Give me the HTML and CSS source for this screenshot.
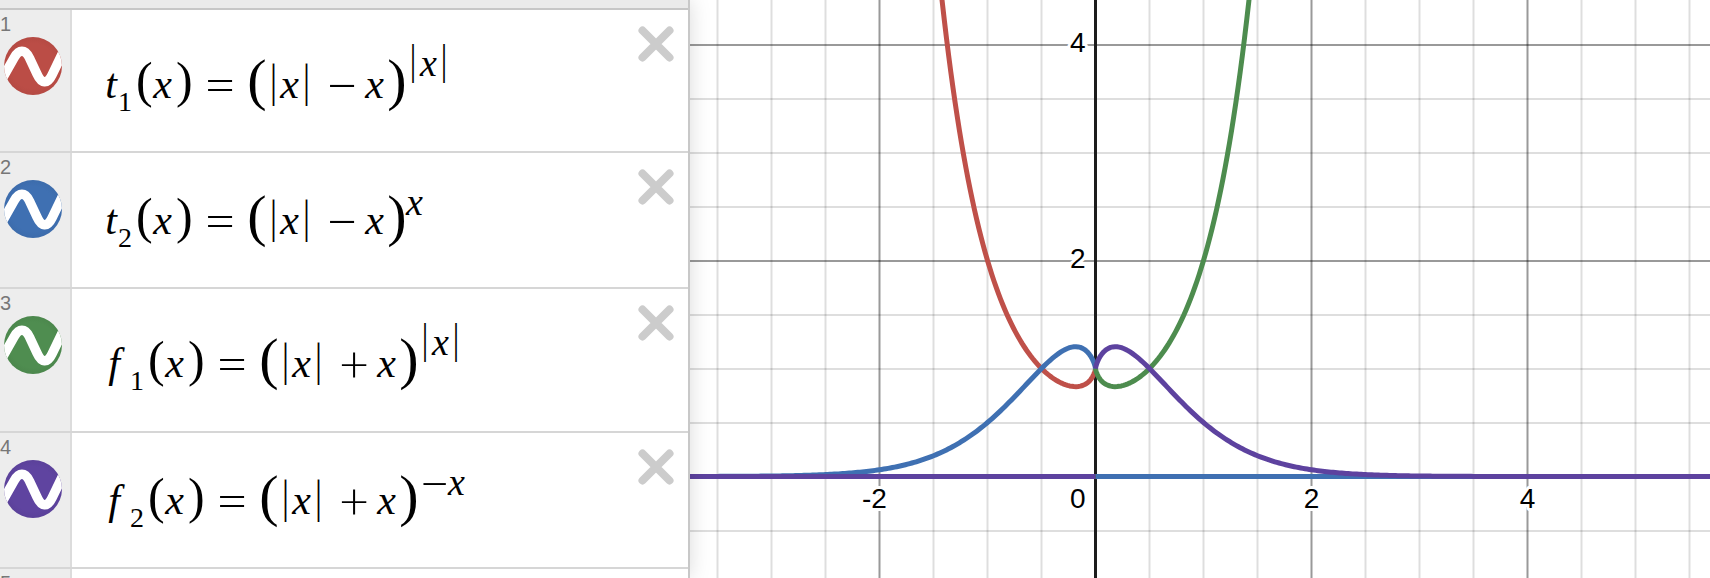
FILE: index.html
```html
<!DOCTYPE html>
<html lang="en">
<head>
<meta charset="utf-8">
<title>Graphing Calculator</title>
<link rel="stylesheet" href="styles.css">
</head>
<body>
<svg class="defs" aria-hidden="true">
  <symbol id="wave" viewBox="0 0 58 58"><path d="M-3 44L10 21C15 12 21 12 25.500 21L33 37C37.500 47 43.500 47.500 48 38L60 13" fill="none" stroke="#fff" stroke-width="9.500"/></symbol>
  <symbol id="cross" viewBox="0 0 36 36"><path d="M4.500 4.500L31.500 31.500M31.500 4.500L4.500 31.500" fill="none" stroke="#ccc" stroke-width="8" stroke-linecap="round"/></symbol>
</svg>
<main class="app">
  <section class="panel" aria-label="Expressions">
    <div class="toolbar"></div>
    <ol class="list">
      <li class="row">
        <div class="tab"><span class="num">1</span><button class="icon red" aria-label="Hide expression 1"><svg><use href="#wave"/></svg></button></div>
        <div class="math tall"><i class="t">t</i><sub>1</sub><span class="lp">(</span><i>x</i><span class="rp">)</span><span class="op eq">=</span><span class="lp big">(</span><span class="bar">|</span><i>x</i><span class="bar">|</span><span class="op bin">−</span><i>x</i><span class="rp big">)</span><sup class="abs"><span class="bar">|</span><i>x</i><span class="bar">|</span></sup></div>
        <button class="close" aria-label="Delete expression 1"><svg><use href="#cross"/></svg></button>
      </li>
      <li class="row">
        <div class="tab"><span class="num">2</span><button class="icon blue" aria-label="Hide expression 2"><svg><use href="#wave"/></svg></button></div>
        <div class="math"><i class="t">t</i><sub>2</sub><span class="lp">(</span><i>x</i><span class="rp">)</span><span class="op eq">=</span><span class="lp big">(</span><span class="bar">|</span><i>x</i><span class="bar">|</span><span class="op bin">−</span><i>x</i><span class="rp big">)</span><sup class="var"><i>x</i></sup></div>
        <button class="close" aria-label="Delete expression 2"><svg><use href="#cross"/></svg></button>
      </li>
      <li class="row">
        <div class="tab"><span class="num">3</span><button class="icon green" aria-label="Hide expression 3"><svg><use href="#wave"/></svg></button></div>
        <div class="math tall deep"><i class="f">f</i><sub>1</sub><span class="lp">(</span><i>x</i><span class="rp">)</span><span class="op eq">=</span><span class="lp big">(</span><span class="bar">|</span><i>x</i><span class="bar">|</span><span class="op bin plus">+</span><i>x</i><span class="rp big">)</span><sup class="abs"><span class="bar">|</span><i>x</i><span class="bar">|</span></sup></div>
        <button class="close" aria-label="Delete expression 3"><svg><use href="#cross"/></svg></button>
      </li>
      <li class="row">
        <div class="tab"><span class="num">4</span><button class="icon purple" aria-label="Hide expression 4"><svg><use href="#wave"/></svg></button></div>
        <div class="math"><i class="f">f</i><sub>2</sub><span class="lp">(</span><i>x</i><span class="rp">)</span><span class="op eq">=</span><span class="lp big">(</span><span class="bar">|</span><i>x</i><span class="bar">|</span><span class="op bin plus">+</span><i>x</i><span class="rp big">)</span><sup><span class="op">−</span><i>x</i></sup></div>
        <button class="close" aria-label="Delete expression 4"><svg><use href="#cross"/></svg></button>
      </li>
      <li class="row">
        <div class="tab"><span class="num">5</span></div>
        <div class="math"></div>
      </li>
    </ol>
  </section>
  <svg class="graph" role="img" aria-label="Graph of four functions"></svg>
</main>
<script src="graph.js"></script>
</body>
</html>
```
FILE: styles.css
```css
* { box-sizing: border-box; }
body {
  margin: 0;
  height: 100vh;
  overflow: hidden;
  background: #fff;
  font-family: "Liberation Sans", Arial, sans-serif;
}
.defs { position: absolute; width: 0; height: 0; }
.app { display: flex; height: 100%; overflow: hidden; }
.panel {
  flex: 0 0 690px;
  z-index: 1;
  background: #fff;
  border-right: 2px solid #c8c8c8;
  box-shadow: 0 0 20px rgba(0, 0, 0, .15);
}
.toolbar { height: 10px; background: #eaeaea; border-bottom: 2px solid #c6c6c6; }
.list { list-style: none; margin: 0; padding: 0; }
.row { display: flex; align-items: stretch; border-bottom: 2px solid #d6d6d6; }
.tab {
  flex: 0 0 72px;
  background: #ededed;
  border-right: 2px solid #dcdcdc;
  display: flex;
  flex-direction: column;
  gap: 2px;
  padding-top: 3px;
}
.num { font-size: 20px; line-height: 22px; color: #777; }
button { border: 0; padding: 0; background: none; cursor: pointer; }
button svg { display: block; width: 100%; height: 100%; }
.icon {
  width: 58px;
  height: 58px;
  margin-left: 4px;
  border-radius: 50%;
  overflow: hidden;
}
.red { background: radial-gradient(circle, #bb4d46 55%, #a9443e); }
.blue { background: radial-gradient(circle, #3f70b2 55%, #38649f); }
.green { background: radial-gradient(circle, #4f8d50 55%, #457c46); }
.purple { background: radial-gradient(circle, #5f44a0 55%, #533b8e); }
.close { flex: none; width: 36px; height: 36px; margin: 16px 14px 0 0; }

.math {
  flex: 1;
  min-height: 134px;
  padding: 42px 0 42px 32px;
  font: 42px/50px "Liberation Serif", "Times New Roman", serif;
  white-space: nowrap;
  color: #000;
}
.math.tall { padding-top: 49px; }
.math.deep { padding-bottom: 43px; }
.math span, .math i, sub, sup { display: inline-block; line-height: 0; text-align: center; }
.math i { width: 21px; }
.math i.t { width: 14px; }
.math i.f { width: 26px; text-align: right; padding-right: 10px; }
sub { width: 14px; margin-right: 4px; font-size: 28px; vertical-align: -13px; }
.math .lp { width: 16px; font-size: 50px; vertical-align: 1px; }
.math .rp { width: 16px; margin-left: 3px; font-size: 50px; vertical-align: 1px; }
.math .op {
  width: 34px;
  font-family: Lato, sans-serif;
  font-weight: 300;
  font-size: 58px;
  vertical-align: -7px;
}
.math .eq { margin: 0 10px 0 11px; }
.math .bin { margin: 0 5px 0 13px; }
.math .op.plus { font-size: 52px; vertical-align: -5px; }
.math .lp.big { width: 20px; font-size: 58px; vertical-align: -1px; }
.math .rp.big { width: 20px; margin-left: 2px; font-size: 58px; vertical-align: -1px; }
.math .bar {
  width: 10px;
  margin: 0 1px;
  font-family: Lato, sans-serif;
  font-weight: 300;
  font-size: 46px;
}
sup { font-size: 38px; vertical-align: 19px; }
sup.abs { vertical-align: 22px; }
sup.var { margin-left: -2px; }
.math sup i { width: 19px; }
.math sup .bar { font-size: 42px; }
.math sup .op { width: 28px; font-size: 54px; }

.graph { flex: 1; min-width: 0; height: 100%; background: #fff; }
.minor { stroke: #000; stroke-opacity: .13; stroke-width: 2; }
.major { stroke: #000; stroke-opacity: .4; stroke-width: 2; }
.axis { stroke: #1c1c1c; stroke-width: 3; }
.curve { fill: none; stroke-width: 5; stroke-linejoin: round; }
.label {
  font-family: "Liberation Sans", Arial, sans-serif;
  font-size: 28px;
  fill: #000;
  stroke: #fff;
  stroke-width: 6;
  stroke-linejoin: round;
  paint-order: stroke;
}
```
FILE: graph.js
```js
const svg = document.querySelector('.graph');
const unit = 108, ox = 405.5, oy = 477;

function add(name, attrs, text) {
  const el = document.createElementNS('http://www.w3.org/2000/svg', name);
  for (const key in attrs) el.setAttribute(key, attrs[key]);
  if (text) el.textContent = text;
  svg.appendChild(el);
}

function draw() {
  svg.replaceChildren();
  const w = svg.clientWidth, h = svg.clientHeight;
  const left = -ox / unit, right = (w - ox) / unit;
  const bottom = (oy - h) / unit, top = oy / unit;

  for (let i = Math.ceil(left * 2); i <= right * 2; i++) {
    if (i === 0) continue;
    const x = ox + i * unit / 2;
    add('line', { x1: x, x2: x, y1: 0, y2: h, class: i % 4 ? 'minor' : 'major' });
  }
  for (let i = Math.ceil(bottom * 2); i <= top * 2; i++) {
    if (i === 0) continue;
    const y = oy - i * unit / 2;
    add('line', { x1: 0, x2: w, y1: y, y2: y, class: i % 4 ? 'minor' : 'major' });
  }
  add('line', { x1: 0, x2: w, y1: oy, y2: oy, class: 'axis' });

  for (let v = 2; v < top; v += 2)
    add('text', { x: ox - 10, y: oy - v * unit + 7, 'text-anchor': 'end', class: 'label' }, String(v));
  add('text', { x: ox - 10, y: oy + 31, 'text-anchor': 'end', class: 'label' }, '0');
  for (let v = Math.ceil(left / 2) * 2; v < right; v += 2) {
    if (v === 0) continue;
    add('text', { x: ox + v * unit - (v < 0 ? 5 : 0), y: oy + 31, 'text-anchor': 'middle', class: 'label' }, String(v));
  }
  add('line', { x1: ox, x2: ox, y1: 0, y2: h, class: 'axis' });

  const curves = [
    ['#bf5049', x => Math.pow(Math.abs(x) - x, Math.abs(x))],
    ['#3f70b2', x => x < 0 ? Math.pow(-2 * x, x) : 0],
    ['#4d8c4e', x => Math.pow(Math.abs(x) + x, Math.abs(x))],
    ['#5d429f', x => x > 0 ? Math.pow(2 * x, -x) : 0]
  ];
  for (const [stroke, f] of curves) {
    for (const side of [-1, 1]) {
      const limit = side < 0 ? -left : right;
      let d = '';
      for (let s = 0.0001; s <= limit; s += s < 0.1 ? 0.002 : 0.02) {
        const y = f(side * s);
        d += (d ? 'L' : 'M') + (ox + side * s * unit).toFixed(2) + ' ' + (oy - 0.5 - y * unit).toFixed(2);
        if (y > top + 1) break;
      }
      if (f(side * limit) < 1) d += 'H' + (side < 0 ? 0 : w);
      add('path', { d, stroke, class: 'curve' });
    }
  }
}

draw();
addEventListener('resize', draw);
```
